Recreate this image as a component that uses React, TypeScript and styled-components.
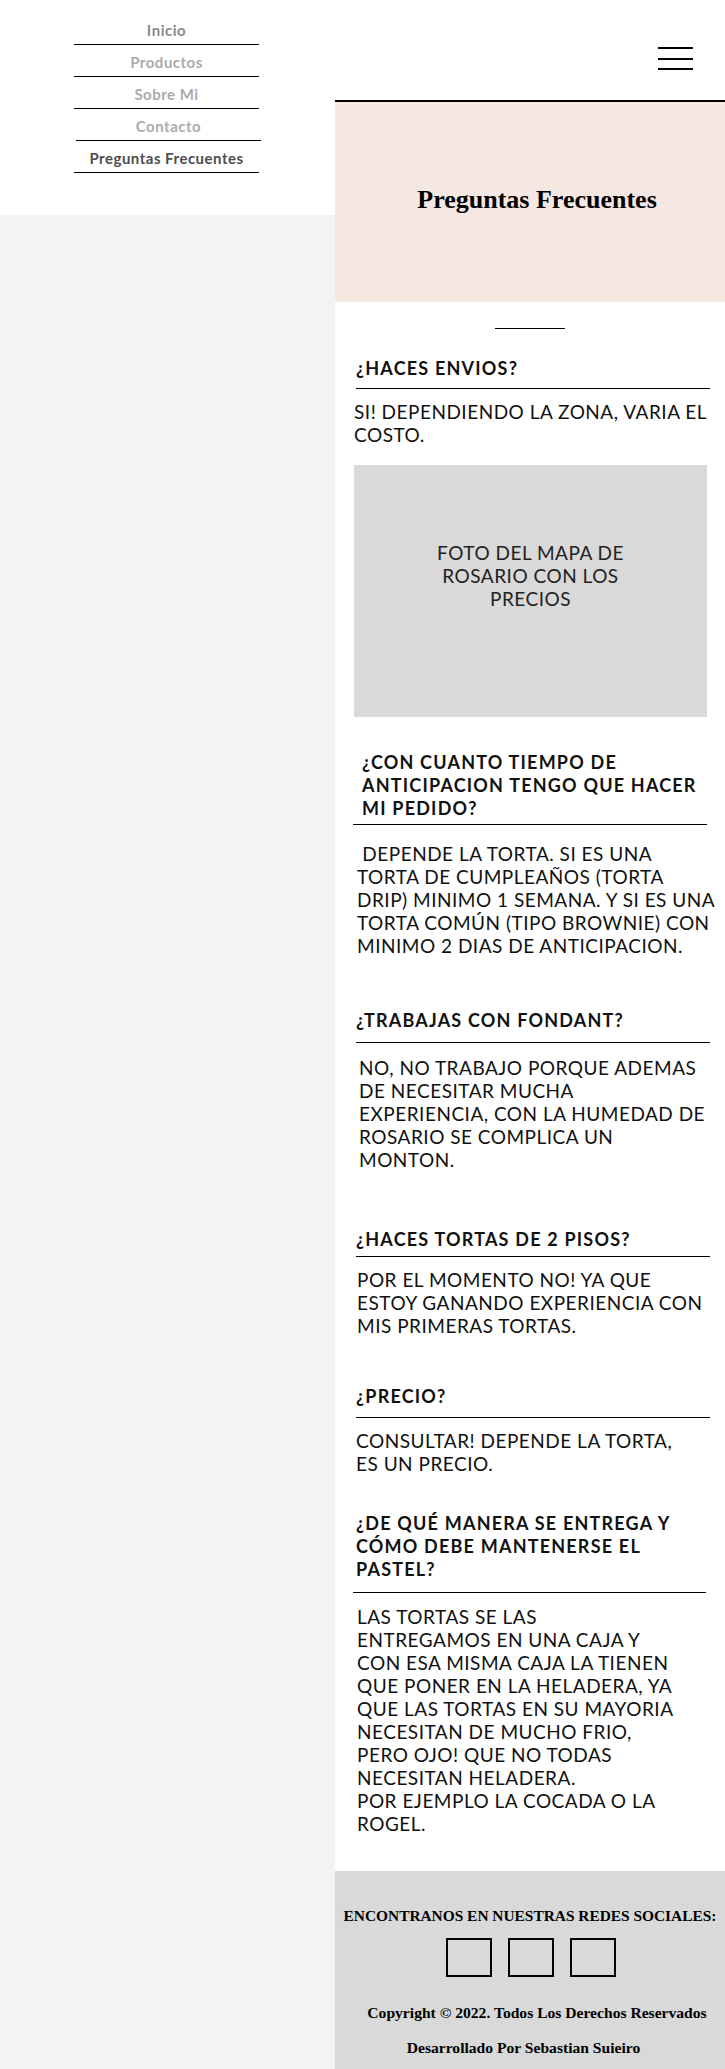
import React from "react";
import styled, { createGlobalStyle } from "styled-components";

const GlobalStyle = createGlobalStyle`
  html, body {
    margin: 0;
    padding: 0;
  }
  body {
    background: #f3f3f3;
    font-family: Lato, "Liberation Sans", sans-serif;
    color: #111;
  }
  * {
    box-sizing: border-box;
  }
`;

interface Faq {
  question: string[];
  answer: string[];
  gap: number;
  qLeft: number;
  qWidth: number;
  qIndent: number;
  qPad: number;
  aLeft: number;
  aTop: number;
}

const navLinks = [
  { label: "Inicio", tone: "#8a8a8a" },
  { label: "Productos", tone: "#ababab" },
  { label: "Sobre Mi", tone: "#ababab" },
  { label: "Contacto", tone: "#ababab", shift: 2 },
  { label: "Preguntas Frecuentes", tone: "#4d4d4d" },
];

const faqs: Faq[] = [
  {
    question: ["¿CON CUANTO TIEMPO DE", "ANTICIPACION TENGO QUE HACER", "MI PEDIDO?"],
    answer: [
      "\u00a0DEPENDE LA TORTA. SI ES UNA",
      "TORTA DE CUMPLEAÑOS (TORTA",
      "DRIP) MINIMO 1 SEMANA. Y SI ES UNA",
      "TORTA COMÚN (TIPO BROWNIE) CON",
      "MINIMO 2 DIAS DE ANTICIPACION.",
    ],
    gap: 34.5, qLeft: 18, qWidth: 354, qIndent: 9, qPad: 3.5, aLeft: 22, aTop: 17.5,
  },
  {
    question: ["¿TRABAJAS CON FONDANT?"],
    answer: [
      "NO, NO TRABAJO PORQUE ADEMAS",
      "DE NECESITAR MUCHA",
      "EXPERIENCIA, CON LA HUMEDAD DE",
      "ROSARIO SE COMPLICA UN",
      "MONTON.",
    ],
    gap: 52, qLeft: 21, qWidth: 354, qIndent: 0, qPad: 9.5, aLeft: 24, aTop: 13.5,
  },
  {
    question: ["¿HACES TORTAS DE 2 PISOS?"],
    answer: ["POR EL MOMENTO NO! YA QUE", "ESTOY GANANDO EXPERIENCIA CON", "MIS PRIMERAS TORTAS."],
    gap: 57, qLeft: 21, qWidth: 354, qIndent: 0, qPad: 4.5, aLeft: 22, aTop: 11.5,
  },
  {
    question: ["¿PRECIO?"],
    answer: ["CONSULTAR! DEPENDE LA TORTA,", "ES UN PRECIO."],
    gap: 48, qLeft: 21, qWidth: 354, qIndent: 0, qPad: 8.5, aLeft: 21, aTop: 11.5,
  },
  {
    question: ["¿DE QUÉ MANERA SE ENTREGA Y", "CÓMO DEBE MANTENERSE EL", "PASTEL?"],
    answer: [
      "LAS TORTAS SE LAS",
      "ENTREGAMOS EN UNA CAJA Y",
      "CON ESA MISMA CAJA LA TIENEN",
      "QUE PONER EN LA HELADERA, YA",
      "QUE LAS TORTAS EN SU MAYORIA",
      "NECESITAN DE MUCHO FRIO,",
      "PERO OJO! QUE NO TODAS",
      "NECESITAN HELADERA.",
      "POR EJEMPLO LA COCADA O LA",
      "ROGEL.",
    ],
    gap: 37, qLeft: 18, qWidth: 353, qIndent: 3, qPad: 10.5, aLeft: 22, aTop: 12.5,
  },
];

const lines = (items: string[]) =>
  items.map((text, i) => (
    <React.Fragment key={i}>
      {i > 0 && <br />}
      {text}
    </React.Fragment>
  ));

export default function App() {
  return (
    <>
      <GlobalStyle />
      <Page>
        <Side>
          <NavPanel>
            {navLinks.map((link) => (
              <NavItem key={link.label} href="#" $tone={link.tone} $shift={link.shift}>
                {link.label}
              </NavItem>
            ))}
          </NavPanel>
        </Side>

        <Main>
          <TopBar>
            <Burger aria-label="menu">
              <span />
              <span />
              <span />
            </Burger>
          </TopBar>

          <Hero>
            <HeroTitle>Preguntas Frecuentes</HeroTitle>
          </Hero>

          <Divider />

          <FaqBlock $gap={27.5}>
            <Question $left={21} $width={354} $indent={0} $pad={8}>
              ¿HACES ENVIOS?
            </Question>
            <Answer $left={19} $top={11.5}>
              {lines(["SI! DEPENDIENDO LA ZONA, VARIA EL", "COSTO."])}
            </Answer>
            <MapPlaceholder>
              {lines(["FOTO DEL MAPA DE", "ROSARIO CON LOS", "PRECIOS"])}
            </MapPlaceholder>
          </FaqBlock>

          {faqs.map((faq) => (
            <FaqBlock key={faq.question[0]} $gap={faq.gap}>
              <Question $left={faq.qLeft} $width={faq.qWidth} $indent={faq.qIndent} $pad={faq.qPad}>
                {lines(faq.question)}
              </Question>
              <Answer $left={faq.aLeft} $top={faq.aTop}>
                {lines(faq.answer)}
              </Answer>
            </FaqBlock>
          ))}

          <Footer>
            <FooterHeading>ENCONTRANOS EN NUESTRAS REDES SOCIALES:</FooterHeading>
            <SocialRow>
              <SocialBox href="#" aria-label="red social 1" />
              <SocialBox href="#" aria-label="red social 2" />
              <SocialBox href="#" aria-label="red social 3" />
            </SocialRow>
            <FooterNote $nudge={14} $top={26}>
              Copyright © 2022. Todos Los Derechos Reservados
            </FooterNote>
            <FooterNote $nudge={-13} $top={15}>
              Desarrollado Por Sebastian Suieiro
            </FooterNote>
          </Footer>
        </Main>
      </Page>
    </>
  );
}

const Page = styled.div`
  display: grid;
  grid-template-columns: 335px 390px;
  min-height: 2069px;
`;

const Side = styled.aside`
  background: #f3f3f3;
`;

const NavPanel = styled.nav`
  display: flex;
  flex-direction: column;
  height: 215px;
  padding-top: 13px;
  background: #fff;
`;

const NavItem = styled.a<{ $tone: string; $shift?: number }>`
  display: block;
  width: 185px;
  height: 32px;
  margin-left: ${({ $shift }) => 74 + ($shift ?? 0)}px;
  padding-top: 4px;
  border-bottom: 1px solid #000;
  font-size: 15px;
  font-weight: 700;
  line-height: 27px;
  letter-spacing: 0.5px;
  text-align: center;
  text-decoration: none;
  color: ${({ $tone }) => $tone};
`;

const Main = styled.main`
  display: flex;
  flex-direction: column;
  background: #fff;
`;

const TopBar = styled.header`
  display: flex;
  justify-content: flex-end;
  align-items: flex-start;
  height: 102px;
  padding: 47px 32px 0 0;
  border-bottom: 2px solid #000;
`;

const Burger = styled.button`
  display: flex;
  flex-direction: column;
  justify-content: space-between;
  width: 35px;
  height: 23px;
  padding: 0;
  border: 0;
  background: none;

  span {
    display: block;
    height: 2px;
    background: #000;
  }
`;

const Hero = styled.section`
  display: flex;
  align-items: center;
  justify-content: center;
  height: 200px;
  padding: 0 0 4px 14px;
  background: #f5e8e3;
`;

const HeroTitle = styled.h1`
  margin: 0;
  font-family: "Liberation Serif", "DejaVu Serif", serif;
  font-size: 26px;
  font-weight: 700;
  color: #000;
`;

const Divider = styled.hr`
  width: 70px;
  height: 1px;
  margin: 26px auto 0;
  border: 0;
  background: #000;
`;

const FaqBlock = styled.article<{ $gap: number }>`
  margin-top: ${({ $gap }) => $gap}px;
`;

const Question = styled.h2<{ $left: number; $width: number; $indent: number; $pad: number }>`
  width: ${({ $width }) => $width}px;
  margin: 0 0 0 ${({ $left }) => $left}px;
  padding: 0 0 ${({ $pad }) => $pad}px ${({ $indent }) => $indent}px;
  border-bottom: 1px solid #000;
  font-size: 18px;
  font-weight: 700;
  line-height: 23px;
  letter-spacing: 1.2px;
  color: #111;
`;

const Answer = styled.p<{ $left: number; $top: number }>`
  margin: ${({ $top }) => $top}px 0 0 ${({ $left }) => $left}px;
  font-size: 19px;
  font-weight: 400;
  line-height: 23px;
  letter-spacing: 0.5px;
  white-space: nowrap;
  color: #111;
`;

const MapPlaceholder = styled.div`
  width: 353px;
  height: 252px;
  margin: 18.5px 0 0 19px;
  padding-top: 76px;
  background: #d9d9d9;
  font-size: 19px;
  line-height: 23px;
  letter-spacing: 0.5px;
  text-align: center;
  color: #222;
`;

const Footer = styled.footer`
  display: flex;
  flex-direction: column;
  align-items: center;
  height: 199px;
  margin-top: 36px;
  padding-top: 35px;
  background: #d9d9d9;
  font-family: "Liberation Serif", "DejaVu Serif", serif;
  font-weight: 700;
  color: #000;
`;

const FooterHeading = styled.h3`
  margin: 0;
  font-size: 15.4px;
  line-height: 20px;
  white-space: nowrap;
`;

const SocialRow = styled.div`
  display: flex;
  gap: 16px;
  margin-top: 12px;
  padding-left: 2px;
`;

const SocialBox = styled.a`
  display: block;
  width: 46px;
  height: 39px;
  border: 2px solid #000;
`;

const FooterNote = styled.p<{ $nudge: number; $top: number }>`
  margin: ${({ $top }) => $top}px 0 0;
  padding-left: ${({ $nudge }) => Math.max($nudge, 0)}px;
  padding-right: ${({ $nudge }) => Math.max(-$nudge, 0)}px;
  font-size: 15.6px;
  line-height: 20px;
  white-space: nowrap;
`;
